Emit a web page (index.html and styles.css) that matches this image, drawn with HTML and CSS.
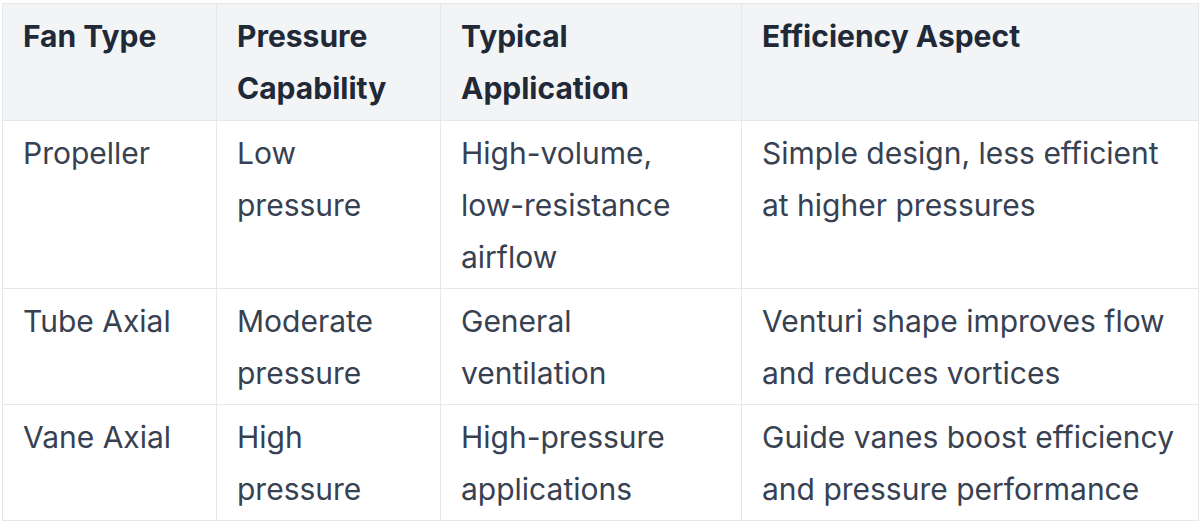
FILE: index.html
```html
<!DOCTYPE html>
<html>
<head>
<meta charset="utf-8">
<link rel="stylesheet" href="styles.css">
</head>
<body>
<table class="fan-table">
  <colgroup>
    <col class="c1"><col class="c2"><col class="c3"><col class="c4">
  </colgroup>
  <thead>
    <tr>
      <th>Fan Type</th>
      <th>Pressure Capability</th>
      <th>Typical Application</th>
      <th>Efficiency Aspect</th>
    </tr>
  </thead>
  <tbody>
    <tr>
      <td>Propeller</td>
      <td>Low pressure</td>
      <td>High-volume, low-resistance airflow</td>
      <td>Simple design, less efficient at higher pressures</td>
    </tr>
    <tr>
      <td>Tube Axial</td>
      <td>Moderate pressure</td>
      <td>General ventilation</td>
      <td>Venturi shape improves flow and reduces vortices</td>
    </tr>
    <tr>
      <td>Vane Axial</td>
      <td>High pressure</td>
      <td>High-pressure applications</td>
      <td>Guide vanes boost efficiency and pressure performance</td>
    </tr>
  </tbody>
</table>
</body>
</html>
```
FILE: styles.css
```css
html, body {
  margin: 0;
  padding: 0;
  background: #ffffff;
}
body {
  padding: 3px 2px 0 2px;
  font-family: Inter, "Noto Sans", sans-serif;
}
.fan-table {
  border-collapse: collapse;
  table-layout: fixed;
  width: 1196px;
  color: #374151;
  font-size: 30px;
  line-height: 52px;
}
.c1 { width: 214px; }
.c2 { width: 224px; }
.c3 { width: 301px; }
.c4 { width: 457px; }
.fan-table th,
.fan-table td {
  border: 1.5px solid #e5e7eb;
  padding: 6px 18px 6px 20px;
  text-align: left;
  vertical-align: top;
}
.fan-table td {
  padding-bottom: 5px;
}
.fan-table th {
  background: #f3f4f6;
  font-weight: 700;
  color: #1f2937;
}
```
